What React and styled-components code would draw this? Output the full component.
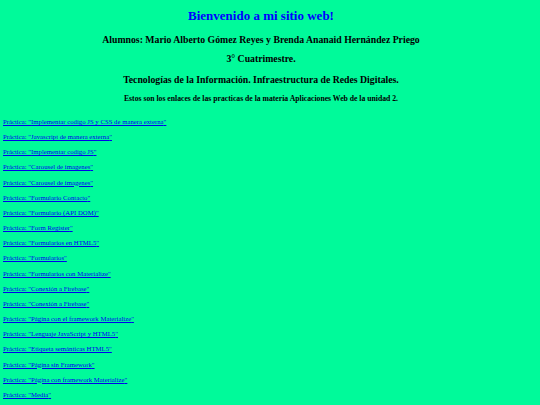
import React from 'react';
import styled, { createGlobalStyle } from 'styled-components';

const GlobalStyle = createGlobalStyle`
  html, body {
    margin: 0;
    padding: 0;
    background: #00fa9a;
  }
  body {
    font-family: "Liberation Serif", "Times New Roman", serif;
    color: #000;
  }
`;

const Page = styled.div`
  padding: 6px 21px 0 3px;
`;

const Header = styled.header`
  display: flex;
  flex-direction: column;
  align-items: center;
  text-align: center;
`;

const Title = styled.h1`
  margin: 0;
  font-size: 13px;
  line-height: 20px;
  font-weight: bold;
  color: #0000ff;
`;

const Heading = styled.h2`
  margin: ${({ $top }) => $top || 4}px 0 0;
  font-size: ${({ $size }) => $size || 9.75}px;
  line-height: 16px;
  font-weight: bold;
`;

const LinkList = styled.ul`
  list-style: none;
  margin: 7px 0 0;
  padding: 0;
  display: flex;
  flex-direction: column;
`;

const Item = styled.li`
  font-size: 6.75px;
  line-height: 15.15px;
`;

const Link = styled.a`
  color: #0000ee;
  text-decoration: underline;
`;

const practicas = [
  'Implementar codigo JS y CSS de manera externa',
  'Javascript de manera externa',
  'Implementar codigo JS',
  'Carousel de imagenes',
  'Carousel de imagenes',
  'Formulario Contacto',
  'Formulario (API DOM)',
  'Form Register',
  'Formularios en HTML5',
  'Formularios',
  'Formularios con Materialize',
  'Conexión a Firebase',
  'Conexión a Firebase',
  'Página con el framework Materialize',
  'Lenguaje JavaScript y HTML5',
  'Etiqueta semánticas HTML5',
  'Página sin Framework',
  'Página con framework Materialize',
  'Media',
];

export default function App() {
  return (
    <>
      <GlobalStyle />
      <Page>
        <Header>
          <Title>Bienvenido a mi sitio web!</Title>
          <Heading $top={6}>Alumnos: Mario Alberto Gómez Reyes y Brenda Ananaid Hernández Priego</Heading>
          <Heading $top={3}>3° Cuatrimestre.</Heading>
          <Heading $top={5}>Tecnologías de la Información. Infraestructura de Redes Digitales.</Heading>
          <Heading $top={3} $size={7.7}>Estos son los enlaces de las practicas de la materia Aplicaciones Web de la unidad 2.</Heading>
        </Header>
        <LinkList>
          {practicas.map((p, i) => (
            <Item key={i}>
              <Link href="#">Práctica: "{p}"</Link>
            </Item>
          ))}
        </LinkList>
      </Page>
    </>
  );
}
